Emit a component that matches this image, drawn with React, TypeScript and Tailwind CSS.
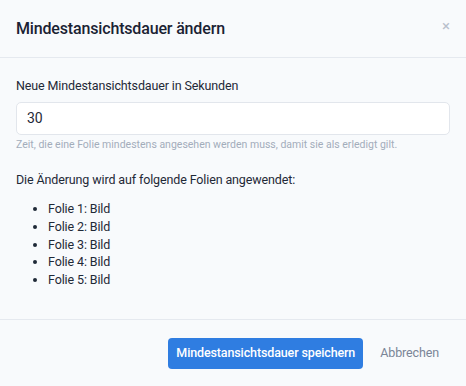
const slides = [1, 2, 3, 4, 5];

export default function App() {
  return (
    <div
      className="flex h-[386px] w-[466px] flex-col bg-[#f8fafc] text-[#1f2937]"
      style={{ fontFamily: 'Roboto, "Noto Sans", sans-serif' }}
    >
      {/* Header */}
      <div className="flex h-[58px] shrink-0 items-center justify-between border-b border-[#e5e9ef] pl-4 pr-4">
        <h2 className="text-[16px] font-medium tracking-[-0.01em] text-[#1a2233]">Mindestansichtsdauer ändern</h2>
        <button className="-mt-[5px] text-[15px] leading-none text-[#b8c0cc]">×</button>
      </div>

      {/* Body */}
      <div className="flex-1 px-4 pt-[19px] text-[12.5px] tracking-[-0.01em]">
        <label className="block leading-[18px] text-[#1f2937]">
          Neue Mindestansichtsdauer in Sekunden
        </label>
        <div className="mt-[7px] flex h-[33px] items-center rounded-[5px] border border-[#e2e6ec] bg-white px-[10px] text-[14px] text-[#1f2937]">
          30
        </div>
        <p className="mt-[2px] text-[10.5px] leading-[15px] tracking-normal text-[#a3adbb]">
          Zeit, die eine Folie mindestens angesehen werden muss, damit sie als erledigt gilt.
        </p>

        <p className="mt-[19px] leading-[18px]">Die Änderung wird auf folgende Folien angewendet:</p>
        <ul className="mt-[11px] list-disc pl-[32px] leading-[17.8px]">
          {slides.map((n) => (
            <li key={n}>Folie {n}: Bild</li>
          ))}
        </ul>
      </div>

      {/* Footer */}
      <div className="flex h-[67px] shrink-0 items-center justify-end gap-[17px] border-t border-[#e5e9ef] pr-[27px] text-[12.5px] tracking-[-0.01em]">
        <button className="h-[31px] rounded-[4px] bg-[#2f7de1] px-[8px] font-medium text-white">
          Mindestansichtsdauer speichern
        </button>
        <button className="text-[#7a8597]">Abbrechen</button>
      </div>
    </div>
  );
}
